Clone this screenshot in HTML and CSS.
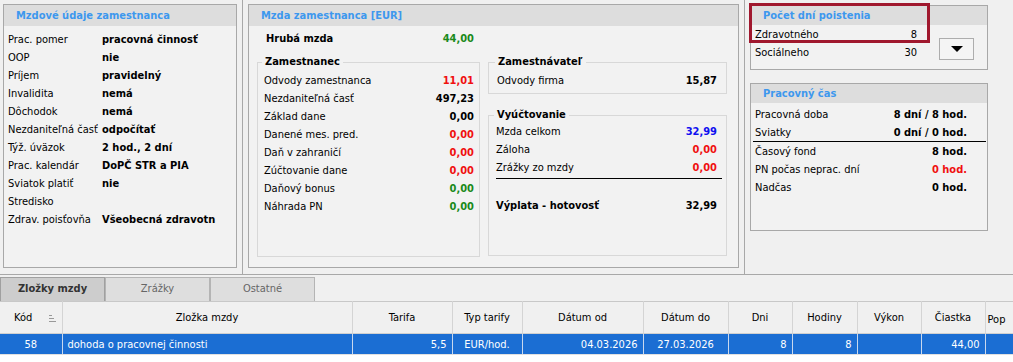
FILE: index.html
```html
<!DOCTYPE html>
<html lang="sk">
<head>
    <meta charset="UTF-8">
    <title>Mzda zamestnanca</title>
    <link rel="stylesheet" href="styles.css">
</head>
<body>
    <div class="top">
        <div class="col col-left">
            <section class="panel panel-emp">
                <h2 class="panel-title">Mzdové údaje zamestnanca</h2>
                <div class="facts">
                    <div class="fact"><span class="k">Prac. pomer</span><b>pracovná činnosť</b></div>
                    <div class="fact"><span class="k">OOP</span><b>nie</b></div>
                    <div class="fact"><span class="k">Príjem</span><b>pravidelný</b></div>
                    <div class="fact"><span class="k">Invalidita</span><b>nemá</b></div>
                    <div class="fact"><span class="k">Dôchodok</span><b>nemá</b></div>
                    <div class="fact"><span class="k">Nezdaniteľná časť</span><b>odpočítať</b></div>
                    <div class="fact"><span class="k">Týž. úväzok</span><b>2 hod., 2 dní</b></div>
                    <div class="fact"><span class="k">Prac. kalendár</span><b>DoPČ STR a PIA</b></div>
                    <div class="fact"><span class="k">Sviatok platiť</span><b>nie</b></div>
                    <div class="fact"><span class="k">Stredisko</span><b></b></div>
                    <div class="fact"><span class="k">Zdrav. poisťovňa</span><b>Všeobecná zdravotn</b></div>
                </div>
            </section>
        </div>

        <div class="col col-mid">
            <section class="panel panel-wage">
                <h2 class="panel-title">Mzda zamestnanca [EUR]</h2>
                <div class="wage">
                    <div class="wage-left">
                        <div class="gross"><span>Hrubá mzda</span><span class="green">44,00</span></div>
                        <fieldset class="group group-emp">
                            <legend>Zamestnanec</legend>
                            <div class="rows">
                                <div class="row"><span>Odvody zamestnanca</span><b class="red">11,01</b></div>
                                <div class="row"><span>Nezdaniteľná časť</span><b>497,23</b></div>
                                <div class="row"><span>Základ dane</span><b>0,00</b></div>
                                <div class="row"><span>Danené mes. pred.</span><b class="red">0,00</b></div>
                                <div class="row"><span>Daň v zahraničí</span><b class="red">0,00</b></div>
                                <div class="row"><span>Zúčtovanie dane</span><b class="red">0,00</b></div>
                                <div class="row"><span>Daňový bonus</span><b class="green">0,00</b></div>
                                <div class="row"><span>Náhrada PN</span><b class="green">0,00</b></div>
                            </div>
                        </fieldset>
                    </div>
                    <div class="wage-right">
                        <fieldset class="group group-firm">
                            <legend>Zamestnávateľ</legend>
                            <div class="row"><span>Odvody firma</span><b>15,87</b></div>
                        </fieldset>
                        <fieldset class="group group-settle">
                            <legend>Vyúčtovanie</legend>
                            <div class="rows">
                                <div class="row"><span>Mzda celkom</span><b class="blue">32,99</b></div>
                                <div class="row"><span>Záloha</span><b class="red">0,00</b></div>
                                <div class="row"><span>Zrážky zo mzdy</span><b class="red">0,00</b></div>
                                <div class="sep"></div>
                                <div class="row total"><b>Výplata - hotovosť</b><b>32,99</b></div>
                            </div>
                        </fieldset>
                    </div>
                </div>
            </section>
        </div>

        <div class="col col-right">
            <section class="panel panel-ins">
                <h2 class="panel-title">Počet dní poistenia</h2>
                <div class="ins-body">
                    <div class="ins-rows">
                        <div class="row"><span>Zdravotného</span><span>8</span></div>
                        <div class="row"><span>Sociálneho</span><span>30</span></div>
                    </div>
                    <button class="drop-btn" type="button">
                        <svg width="12" height="7" viewBox="0 0 12 7"><path d="M0 0h12L6 6z" fill="#000"/></svg>
                    </button>
                </div>
            </section>

            <section class="panel panel-time">
                <h2 class="panel-title">Pracovný čas</h2>
                <div class="time-body">
                    <div class="row"><span>Pracovná doba</span><b>8 dní / 8 hod.</b></div>
                    <div class="row"><span>Sviatky</span><b>0 dní / 0 hod.</b></div>
                    <div class="sep"></div>
                    <div class="row"><span>Časový fond</span><b>8 hod.</b></div>
                    <div class="row"><span>PN počas neprac. dní</span><b class="red">0 hod.</b></div>
                    <div class="row"><span>Nadčas</span><b>0 hod.</b></div>
                </div>
            </section>

            <!-- zvýraznenie -->
            <div class="highlight"></div>
        </div>
    </div>

    <div class="tabs">
        <div class="tab active">Zložky mzdy</div>
        <div class="tab">Zrážky</div>
        <div class="tab">Ostatné</div>
    </div>

    <div class="grid-wrap">
        <table class="grid">
            <colgroup>
                <col style="width:62px"><col style="width:290px"><col style="width:100px">
                <col style="width:70px"><col style="width:121px"><col style="width:85px">
                <col style="width:64px"><col style="width:65px"><col style="width:64px">
                <col style="width:64px"><col style="width:28px">
            </colgroup>
            <thead>
                <tr>
                    <th class="th-code">Kód
                        <svg class="sort-ico" width="7" height="7" viewBox="0 0 7 7"><path d="M0 .5h3M0 3.5h5M0 6.5h7" stroke="#999" stroke-width="1"/></svg>
                    </th>
                    <th>Zložka mzdy</th>
                    <th>Tarifa</th>
                    <th>Typ tarify</th>
                    <th>Dátum od</th>
                    <th>Dátum do</th>
                    <th>Dni</th>
                    <th>Hodiny</th>
                    <th>Výkon</th>
                    <th>Čiastka</th>
                    <th class="th-pop">Pop</th>
                </tr>
            </thead>
            <tbody>
                <tr class="selected">
                    <td class="c">58</td>
                    <td class="l">dohoda o pracovnej činnosti</td>
                    <td class="r">5,5</td>
                    <td class="c">EUR/hod.</td>
                    <td class="r">04.03.2026</td>
                    <td class="c">27.03.2026</td>
                    <td class="r">8</td>
                    <td class="r">8</td>
                    <td class="r"></td>
                    <td class="r">44,00</td>
                    <td></td>
                </tr>
            </tbody>
        </table>
    </div>
</body>
</html>
```

FILE: styles.css
```css
body {
    margin: 0;
    width: 1013px;
    height: 362px;
    overflow: hidden;
    font-family: "DejaVu Sans Condensed", "DejaVu Sans", sans-serif;
    font-size: 11px;
    color: #000;
    background: #f0f0f0;
}

.red { color: #f01010; }
.green { color: #1a8a1a; }
.blue { color: #1010f0; }

/* horná časť */
.top {
    display: flex;
    height: 274px;
    border-bottom: 1px solid #a8a8a8;
}

.col {
    box-sizing: border-box;
    padding-top: 4px;
}

.col-left {
    width: 243px;
    padding-left: 3px;
    border-right: 1px solid #a8a8a8;
}

.col-mid {
    width: 502px;
    padding-left: 5px;
    border-right: 1px solid #a8a8a8;
}

.col-right {
    flex: 1;
    padding-left: 5px;
    padding-top: 5px;
    position: relative;
}

.panel {
    box-sizing: border-box;
    border: 1px solid #a8a8a8;
    background: #f2f2f2;
}

.panel-title {
    margin: 0;
    height: 21px;
    line-height: 21px;
    padding-left: 12px;
    background: #dddddd;
    color: #3d98ee;
    font-size: 11px;
    font-weight: bold;
}

.row, .fact {
    display: flex;
    align-items: center;
    height: 18px;
    white-space: nowrap;
}

.row {
    justify-content: space-between;
}

/* mzdové údaje */
.panel-emp {
    width: 234px;
    height: 264px;
}

.facts {
    padding: 4px 0 0 4px;
}

.fact .k {
    width: 94px;
    flex-shrink: 0;
}

/* mzda */
.panel-wage {
    width: 491px;
    height: 264px;
}

.wage {
    display: grid;
    grid-template-columns: 223px 239px;
    column-gap: 8px;
    padding: 3px 0 0 8px;
}

.gross {
    display: flex;
    justify-content: space-between;
    align-items: center;
    height: 18px;
    padding: 0 6px 0 9px;
    font-weight: bold;
}

.group {
    margin: 8px 0 0;
    padding: 2px 5px 0 6px;
    border: 1px solid #d8d8d8;
    min-width: 0;
}

.group legend {
    margin-left: -2px;
    padding: 0 3px;
    line-height: 14px;
    font-weight: bold;
}

.group-emp .rows {
    height: 185px;
}

.group-firm {
    margin-top: 26px;
    padding: 2px 9px 4px 8px;
}

.group-settle {
    margin-top: 14px;
    padding: 0 9px 0 7px;
}

.group-settle .rows {
    height: 133px;
}

.group-settle .sep {
    height: 1px;
    background: #000;
    margin: 2px -5px 17px 0;
}

/* poistenie */
.panel-ins {
    width: 238px;
    height: 65px;
}

.panel-ins .panel-title,
.panel-time .panel-title {
    height: 19px;
    line-height: 19px;
}

.ins-body {
    display: flex;
    align-items: flex-start;
}

.ins-rows {
    width: 162px;
    padding-left: 4px;
}

.drop-btn {
    margin: 13px 0 0 22px;
    width: 35px;
    height: 22px;
    padding: 0;
    border: 1px solid #adadad;
    background: #f4f4f4;
    display: flex;
    align-items: center;
    justify-content: center;
}

.panel-time {
    width: 238px;
    height: 148px;
    margin-top: 13px;
}

.time-body {
    padding-top: 2px;
}

.time-body .row {
    padding: 0 20px 0 4px;
}

.time-body .sep {
    height: 1px;
    background: #000;
    margin: 0 1px 0 2px;
}

.highlight {
    position: absolute;
    left: 4px;
    top: 3px;
    width: 181px;
    height: 40px;
    box-sizing: border-box;
    border: 3px solid #a0182e;
}

/* záložky */
.tabs {
    display: flex;
    height: 26px;
    padding-top: 2px;
    box-sizing: border-box;
}

.tab {
    width: 105px;
    height: 24px;
    box-sizing: border-box;
    border: 1px solid #b4b4b4;
    border-bottom: none;
    background: #dedede;
    color: #666;
    text-align: center;
    line-height: 22px;
}

.tab.active {
    background: #cdcdcd;
    border-color: #a0a0a0;
    color: #333;
    font-weight: bold;
}

/* tabuľka */
.grid-wrap {
    background: #fff;
    height: 62px;
}

.grid {
    border-collapse: collapse;
    table-layout: fixed;
    width: 1013px;
    border-top: 1px solid #c8c8c8;
}

.grid th {
    height: 31px;
    padding: 0 3px;
    font-weight: normal;
    background: #f0f0f0;
    border-right: 1px solid #d4d4d4;
    border-bottom: 1px solid #d0d0d0;
    white-space: nowrap;
    overflow: hidden;
}

.grid .th-code {
    text-align: left;
    padding-left: 14px;
}

.sort-ico {
    margin-left: 14px;
    vertical-align: middle;
}

.grid .th-pop {
    height: 27px;
    padding: 4px 0 0 2px;
    text-align: left;
    border-right: none;
}

.grid td {
    height: 20px;
    padding: 0 5px;
    white-space: nowrap;
    overflow: hidden;
    border-right: 1px solid #c9d8ee;
    border-bottom: 1px solid #e0e0e0;
}

.selected td {
    background: #1b6ed3;
    color: #fff;
}

.grid td.c { text-align: center; }
.grid td.l { text-align: left; }
.grid td.r { text-align: right; }
```
